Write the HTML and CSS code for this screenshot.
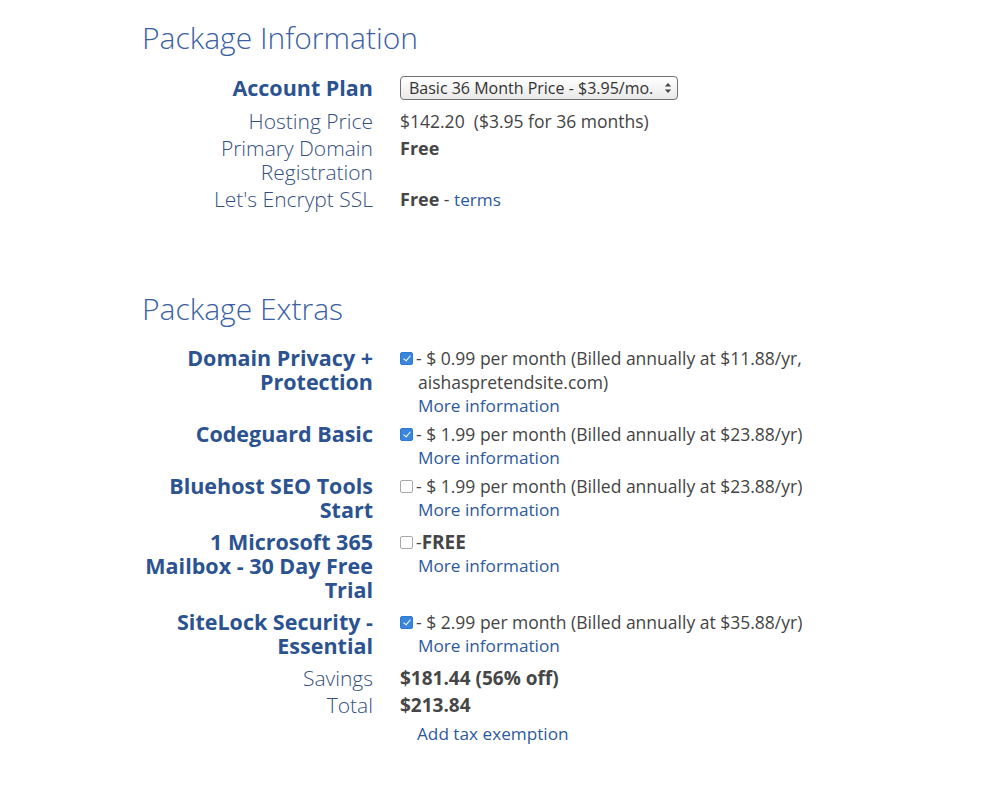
FILE: index.html
```html
<!DOCTYPE html>
<html lang="en">
<head>
<meta charset="utf-8">
<title>Package Information</title>
<link rel="stylesheet" href="styles.css">
</head>
<body>
<main class="page">
  <h2 class="section-title">Package Information</h2>
  <div class="rows info-rows">
    <div class="row plan-row">
      <div class="label strong">Account Plan</div>
      <div class="value">
        <div class="select">
          <span class="select-text">Basic 36 Month Price - $3.95/mo.</span>
          <svg class="select-arrows" width="8" height="12" viewBox="0 0 8 12"><path d="M4 1 L7.2 4.6 H0.8 Z M4 11 L7.2 7.4 H0.8 Z" fill="#444"/></svg>
        </div>
      </div>
    </div>
    <div class="row gap-plan">
      <div class="label">Hosting Price</div>
      <div class="value">$142.20&nbsp; ($3.95 for 36 months)</div>
    </div>
    <div class="row">
      <div class="label">Primary Domain Registration</div>
      <div class="value"><b>Free</b></div>
    </div>
    <div class="row">
      <div class="label">Let's Encrypt SSL</div>
      <div class="value"><b>Free</b> - <a class="link" href="#">terms</a></div>
    </div>
  </div>

  <h2 class="section-title extras-title">Package Extras</h2>
  <div class="rows extras-rows">
    <div class="row">
      <div class="label strong">Domain Privacy + Protection</div>
      <div class="value option">
        <span class="check checked"></span>
        <div class="option-text">
          <div class="first">- $ 0.99 per month (Billed annually at $11.88/yr, aishaspretendsite.com)</div>
          <a class="link block" href="#">More information</a>
        </div>
      </div>
    </div>
    <div class="row">
      <div class="label strong">Codeguard Basic</div>
      <div class="value option">
        <span class="check checked"></span>
        <div class="option-text">
          <div class="first">- $ 1.99 per month (Billed annually at $23.88/yr)</div>
          <a class="link block" href="#">More information</a>
        </div>
      </div>
    </div>
    <div class="row">
      <div class="label strong">Bluehost SEO Tools Start</div>
      <div class="value option">
        <span class="check"></span>
        <div class="option-text">
          <div class="first">- $ 1.99 per month (Billed annually at $23.88/yr)</div>
          <a class="link block" href="#">More information</a>
        </div>
      </div>
    </div>
    <div class="row spaced">
      <div class="label strong">1 Microsoft 365 Mailbox - 30 Day Free Trial</div>
      <div class="value option">
        <span class="check"></span>
        <div class="option-text">
          <div class="first">-<b class="big">FREE</b></div>
          <a class="link block" href="#">More information</a>
        </div>
      </div>
    </div>
    <div class="row spaced">
      <div class="label strong">SiteLock Security - Essential</div>
      <div class="value option">
        <span class="check checked"></span>
        <div class="option-text">
          <div class="first">- $ 2.99 per month (Billed annually at $35.88/yr)</div>
          <a class="link block" href="#">More information</a>
        </div>
      </div>
    </div>
    <div class="row spaced">
      <div class="label">Savings</div>
      <div class="value"><b class="big">$181.44 (56% off)</b></div>
    </div>
    <div class="row tight">
      <div class="label">Total</div>
      <div class="value"><b class="big">$213.84</b></div>
    </div>
    <div class="row">
      <div class="label"></div>
      <div class="value indent"><a class="link" href="#">Add tax exemption</a></div>
    </div>
  </div>
</main>
</body>
</html>
```

FILE: styles.css
```css
html, body {
  margin: 0;
  padding: 0;
  background: #ffffff;
}

body {
  font-family: "Open Sans", "Liberation Sans", Arial, sans-serif;
  color: #444444;
}

.page {
  padding: 20px 0 40px 142px;
}

.section-title {
  margin: 0;
  font-size: 30px;
  line-height: 36px;
  font-weight: 300;
  color: #3b61a4;
}

.extras-title {
  margin-top: 79px;
}

.rows {
  display: flex;
  flex-direction: column;
  gap: 3px;
}

.info-rows {
  margin-top: 17px;
}

.extras-rows {
  margin-top: 19px;
  gap: 4px;
}

.row {
  display: grid;
  grid-template-columns: 231px 440px;
  column-gap: 27px;
  align-items: start;
}

.row.spaced {
  margin-top: 4px;
}

.row.tight {
  margin-top: -1px;
}

.plan-row {
  min-height: 30px;
  align-items: center;
}

.row.gap-plan {
  margin-top: 3px;
}

.label {
  text-align: right;
  font-size: 21px;
  line-height: 24px;
  font-weight: 300;
  color: #34507f;
}

.label.strong {
  font-size: 21.5px;
  font-weight: 700;
  color: #2c5391;
}

.value {
  font-size: 17.5px;
  line-height: 24px;
  color: #444444;
}

.value b {
  font-size: 18px;
  line-height: 20px;
  font-weight: 700;
  color: #464646;
}

.value b.big {
  font-size: 19px;
}

.link {
  font-size: 17.2px;
  color: #2d5a9c;
  text-decoration: none;
}

.link.block {
  display: block;
}

.indent {
  padding-left: 17px;
}

.option {
  display: flex;
  align-items: flex-start;
}

.option-text {
  max-width: 410px;
}

.option-text .first {
  text-indent: -2px;
}

.check {
  flex: none;
  width: 11px;
  height: 11px;
  margin-top: 6px;
  margin-right: 5px;
  border: 1px solid #a8a8a8;
  border-radius: 2px;
  background: #ffffff;
  position: relative;
}

.check.checked {
  border-color: #2f78d0;
  background: #3a86dc;
}

.check.checked::after {
  content: "";
  position: absolute;
  left: 3.5px;
  top: 1px;
  width: 3px;
  height: 6px;
  border: solid #ffffff;
  border-width: 0 1.5px 1.5px 0;
  transform: rotate(40deg);
}

.select {
  display: flex;
  align-items: center;
  justify-content: space-between;
  width: 278px;
  height: 24px;
  box-sizing: border-box;
  padding: 0 5px 0 8px;
  border: 1px solid #6f6f6f;
  border-radius: 4px;
  background: linear-gradient(#ffffff, #e9e9e9);
  font-size: 16px;
  line-height: 22px;
  color: #333333;
}

.select-text {
  white-space: nowrap;
}

.select-arrows {
  flex: none;
}
```
